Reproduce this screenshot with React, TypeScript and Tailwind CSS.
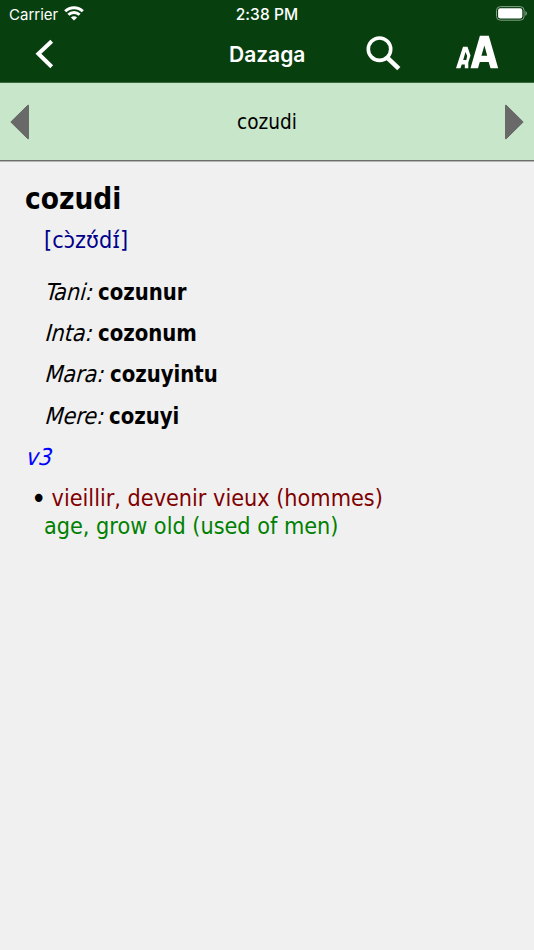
const forms = [
  ['Tani:', 'cozunur'],
  ['Inta:', 'cozonum'],
  ['Mara:', 'cozuyintu'],
  ['Mere:', 'cozuyi'],
];

function StatusBar() {
  return (
    <div className="flex h-[27px] items-center pl-[9px] pr-[7px] font-['Inter',sans-serif] text-white">
      <div className="flex w-[200px] shrink-0 items-center gap-[5px]">
        <span className="w-[50px] pt-[2px] text-[15px] leading-[26px]">Carrier</span>
        <svg width="20" height="15" viewBox="0 0 20 15" fill="none" stroke="white" strokeWidth="3">
          <path d="M1.200 5.300a12.600 12.600 0 0 1 17.600 0" />
          <path d="M4.400 8.800a8 8 0 0 1 11.200 0" />
          <path d="M10 14.600 6.900 11.500a4.400 4.400 0 0 1 6.200 0Z" fill="white" stroke="none" />
        </svg>
      </div>
      <span className="grow whitespace-nowrap pt-[2px] text-center text-[15.500px] font-medium leading-[26px] tracking-[0.1px]">2:38 PM</span>
      <div className="flex w-[202px] shrink-0 justify-end">
        <svg width="31" height="15" viewBox="0 0 31 15">
          <rect x="0.5" y="0.6" width="27.6" height="13.600" rx="3.8" fill="none" stroke="#83a086" strokeWidth="1" />
          <rect x="2.1" y="2.3" width="24.200" height="10.200" rx="2.2" fill="white" />
          <path d="M29.4 5.1c2 .8 2 3.8 0 4.600Z" fill="#83a086" />
        </svg>
      </div>
    </div>
  );
}

function NavBar() {
  return (
    <div className="flex h-[55px] text-white">
      <svg className="shrink-0" width="229" height="55" fill="none" stroke="white" strokeWidth="4">
        <path d="M51.7 14.2 38.4 26.8 51.7 39.8" />
      </svg>
      <span className="w-[77px] shrink-0 whitespace-nowrap font-['Inter',sans-serif] text-[21px] font-semibold leading-[56px]">Dazaga</span>
      <svg className="shrink-0" width="228" height="55">
        <g fill="none" stroke="white">
          <circle cx="73.5" cy="22.2" r="11.2" strokeWidth="3.6" />
          <path d="m82 31.300 10.800 10.400" strokeWidth="4.600" />
        </g>
        <path fill="white" fillRule="evenodd" d="M150 41.300 157 19.800H161.500L164.500 28.500 162.300 35.500V41.300H158.800V37.500H155.700L154.500 41.300ZM157.200 33H160.300L161.200 29 159.500 25Z" />
        <path fill="white" fillRule="evenodd" d="M164.500 41.300 173.900 8.800H182.800L192.200 41.300H184.500L182.700 35H173.800L172 41.300ZM175.400 28.800H181.200L178.400 18.500Z" />
      </svg>
    </div>
  );
}

export default function App() {
  return (
    <div className="flex min-h-[950px] w-[534px] flex-col overflow-hidden bg-[#f0f0f0] font-['DejaVu_Sans_Condensed','DejaVu_Sans',sans-serif] [font-stretch:condensed] text-black">
      <header className="h-[83px] border-b border-[#376b3b] bg-[#083f0f]">
        <StatusBar />
        <NavBar />
      </header>
      <div className="flex h-[78px] items-center justify-between border-b border-[#6b6f6b] bg-[#c8e6c9] px-[10px]">
        <svg width="19" height="36" viewBox="0 0 19 36"><path d="M.8 18 17.800 1.200H18.500V34.800H17.800Z" fill="#696969" stroke="#696969" strokeLinejoin="round" /></svg>
        <span className="text-[20.600px] leading-[30px]">cozudi</span>
        <svg width="19" height="36" viewBox="0 0 19 36"><path d="M18.200 18 1.200 1.200H.5V34.800H1.200Z" fill="#696969" stroke="#696969" strokeLinejoin="round" /></svg>
      </div>
      <main className="border-t border-[#b4b6b4] pl-[25px] pt-[16px] text-[23.200px]">
        <h1 className="text-[29.500px] font-bold leading-[43px]">cozudi</h1>
        <div className="h-[40px] pl-[19px] leading-[38px] text-[#00008b]">[cɔ̀zʊ́dɪ́]</div>
        <div className="pl-[19px] pt-[10px]">
          {forms.map(([label, word]) => (
            <div key={label} className="h-[41.200px] whitespace-nowrap leading-[41px]">
              <span className="inline-block origin-[0_70%] -skew-x-[15deg]">{label}</span> <b className="inline-block origin-left scale-x-[0.945]">{word}</b>
            </div>
          ))}
        </div>
        <div className="h-[41.200px] leading-[41px] text-[#0000ff]"><span className="inline-block origin-[0_70%] -skew-x-[15deg]">v3</span></div>
        <div className="pl-[7px] pt-[7px] leading-[28px] text-[#800000]">
          <span className="inline-block w-[12px] text-black"><span className="-ml-[1.500px] inline-block origin-left scale-125">•</span></span><span className="inline-block w-[7.600px]" />vieillir, devenir vieux (hommes)
        </div>
        <div className="pl-[19px] leading-[28px] text-[#008000]">age, grow old (used of men)</div>
      </main>
    </div>
  );
}
